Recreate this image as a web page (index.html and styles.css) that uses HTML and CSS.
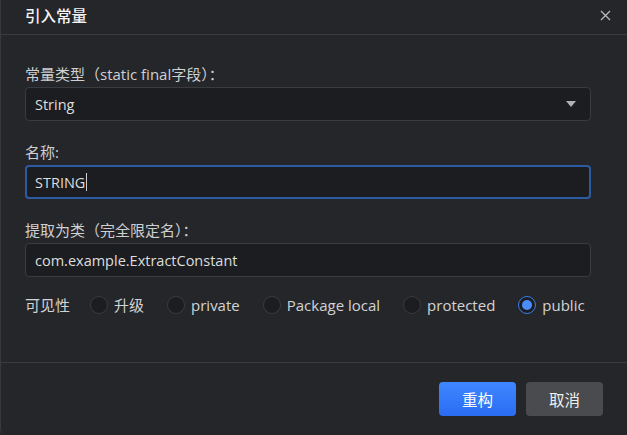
FILE: index.html
```html
<!DOCTYPE html>
<html lang="zh">
<head>
<meta charset="utf-8">
<link rel="stylesheet" href="styles.css">
</head>
<body>
<div class="dialog">
  <div class="header">
    <span class="title">引入常量</span>
    <span class="close">
      <svg width="11" height="11" viewBox="0 0 11 11"><path d="M1 1L10 10M10 1L1 10" stroke="#b8b9bc" stroke-width="1.3" fill="none"/></svg>
    </span>
  </div>
  <div class="content">
    <div class="field">
      <div class="label">常量类型（static final字段）：</div>
      <div class="box select">
        <span>String</span>
        <svg class="arrow" width="10" height="6" viewBox="0 0 10 6"><path d="M0 0H10L5 6Z" fill="#b0b1b4"/></svg>
      </div>
    </div>
    <div class="field">
      <div class="label">名称:</div>
      <div class="box focus"><span>STRING</span><span class="caret"></span></div>
    </div>
    <div class="field last">
      <div class="label">提取为类（完全限定名）：</div>
      <div class="box"><span>com.example.ExtractConstant</span></div>
    </div>
    <div class="radios">
      <span class="rlabel">可见性</span>
      <span class="opt"><span class="radio"></span>升级</span>
      <span class="opt"><span class="radio"></span>private</span>
      <span class="opt"><span class="radio"></span>Package local</span>
      <span class="opt"><span class="radio"></span>protected</span>
      <span class="opt"><span class="radio checked"></span>public</span>
    </div>
  </div>
  <div class="footer">
    <button class="btn primary">重构</button>
    <button class="btn secondary">取消</button>
  </div>
</div>
</body>
</html>
```

FILE: styles.css
```css
html, body {
  margin: 0;
  padding: 0;
  background: #252629;
}
body {
  font-family: "Open Sans", "Noto Sans CJK SC", sans-serif;
  color: #d2d3d5;
}
.dialog {
  width: 627px;
  height: 435px;
  box-sizing: border-box;
  border-left: 1px solid #38393d;
  border-bottom-left-radius: 6px;
  background: #252629;
  display: flex;
  flex-direction: column;
}
.header {
  height: 35px;
  box-sizing: border-box;
  border-bottom: 1px solid #3b3c40;
  display: flex;
  align-items: center;
  justify-content: space-between;
  padding: 0 16px 3px 24px;
}
.title {
  font-size: 15.5px;
  color: #f4f4f5;
  font-weight: 500;
}
.close {
  display: flex;
}
.content {
  padding: 29px 36px 0 24px;
  flex: 1;
}
.field {
  margin-bottom: 21px;
}
.field.last {
  margin-bottom: 18px;
}
.label {
  font-size: 15px;
  line-height: 20px;
  margin-bottom: 3px;
  color: #cfd0d2;
}
.box {
  height: 34px;
  box-sizing: border-box;
  background: #1c1d20;
  border: 1px solid #3a3b3f;
  border-radius: 4px;
  display: flex;
  align-items: center;
  padding: 0 9px;
  font-size: 14.5px;
  color: #dcdddf;
}
.select {
  justify-content: space-between;
  padding-right: 14px;
}
.arrow {
  display: block;
}
.focus {
  border: 2px solid #2c5aa3;
  padding: 0 8px;
}
.caret {
  width: 1px;
  height: 18px;
  background: #d0d0d0;
  margin-left: 1px;
}
.radios {
  display: flex;
  align-items: center;
  font-size: 15px;
  line-height: 20px;
}
.rlabel {
  margin-right: 20px;
}
.opt {
  display: flex;
  align-items: center;
  margin-right: 23px;
}
.opt:last-child {
  margin-right: 0;
}
.radio {
  width: 18px;
  height: 18px;
  box-sizing: border-box;
  border-radius: 50%;
  border: 1px solid #3a3b3f;
  background: #1c1d20;
  margin-right: 6px;
  position: relative;
}
.radio.checked {
  border: 1.5px solid #3b7ded;
}
.radio.checked::after {
  content: "";
  position: absolute;
  left: 2.5px;
  top: 2.5px;
  width: 10px;
  height: 10px;
  border-radius: 50%;
  background: #4a8df9;
}
.footer {
  height: 73px;
  box-sizing: border-box;
  border-top: 1px solid #3b3c40;
  display: flex;
  justify-content: flex-end;
  align-items: flex-start;
  padding: 19px 24px 0 0;
  gap: 10px;
}
.btn {
  width: 77px;
  height: 34px;
  border: none;
  border-radius: 4px;
  font-family: "Open Sans", "Noto Sans CJK SC", sans-serif;
  font-size: 15.5px;
  color: #ffffff;
  padding: 0;
}
.primary {
  background: linear-gradient(#3f87ff, #2a6cf3);
}
.secondary {
  background: #4a4b4f;
  color: #f0f0f0;
}
```
